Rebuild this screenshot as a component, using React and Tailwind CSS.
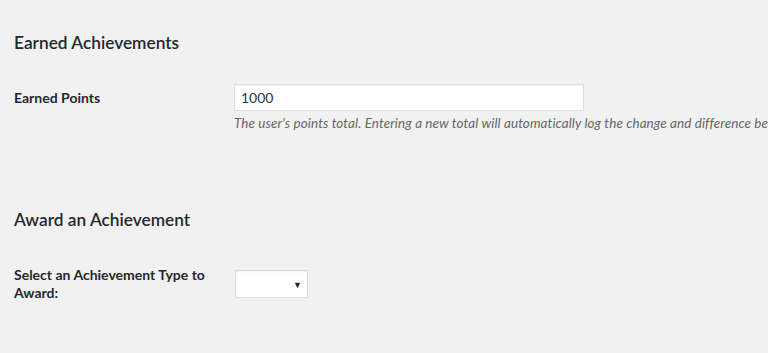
import React from 'react';

const font = "font-['Lato','Noto_Sans',sans-serif]";

const App = () => {
  return (
    <div className={`${font} w-[768px] h-[353px] overflow-hidden bg-[#f1f1f1] text-[#23282d] pl-[14px]`}>
      <h2 className="pt-[31px] text-[17.3px] leading-[24px] font-semibold">Earned Achievements</h2>

      <div className="flex mt-[29px]">
        <div className="w-[220px] shrink-0 pt-[5px] text-[14px] leading-[18px] font-bold">Earned Points</div>
        <div className="flex flex-col">
          <input
            type="text"
            defaultValue="1000"
            className="w-[350px] h-[27px] px-[6px] bg-white border border-[#ddd] shadow-[inset_0_1px_2px_rgba(0,0,0,0.07)] text-[14px] text-[#32373c] outline-none"
          />
          <p className="mt-[3px] whitespace-nowrap text-[13.4px] leading-[18px] tracking-[0.12px] italic text-[#666]">
            The user's points total. Entering a new total will automatically log the change and difference between totals.
          </p>
        </div>
      </div>

      <h2 className="mt-[76px] text-[17.3px] leading-[24px] font-semibold">Award an Achievement</h2>

      <div className="flex mt-[34px]">
        <div className="w-[200px] shrink-0 text-[14px] leading-[18px] font-bold">
          Select an Achievement Type to Award:
        </div>
        <div className="ml-[21px] mt-[4px] relative self-start">
          <select className="appearance-none w-[73px] h-[28px] bg-white border border-[#ddd] shadow-[inset_0_1px_2px_rgba(0,0,0,0.07)] outline-none">
            <option value=""></option>
          </select>
          <span className="absolute right-[6px] top-[10px] text-[9px] leading-none text-[#23282d] pointer-events-none">▼</span>
        </div>
      </div>
    </div>
  );
};

export default App;
